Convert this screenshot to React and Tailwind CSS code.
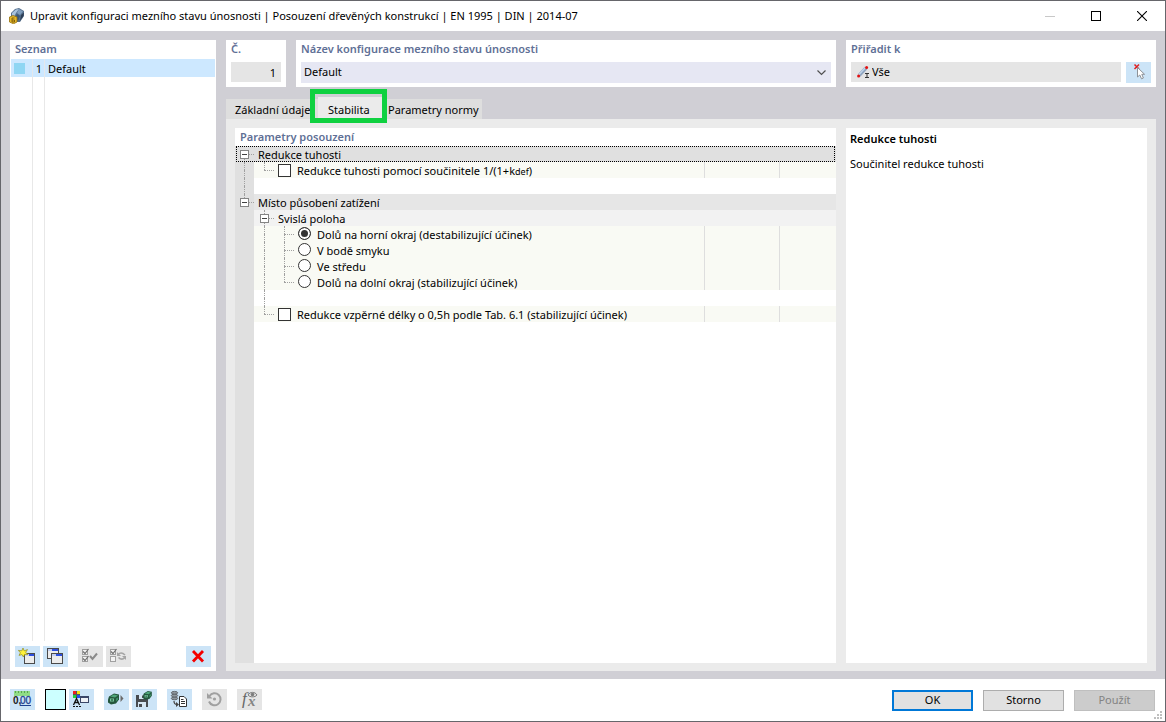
import React, { useState } from 'react';

/* ---------- icons ---------- */

const Icon = ({ children, className = 'h-[21px] w-[25px]', box = '0 0 25 21' }) => (
  <svg viewBox={box} className={className} aria-hidden="true">
    {children}
  </svg>
);

const MiniWindow = ({ x, y, w = 11, h = 10 }) => (
  <g shapeRendering="crispEdges">
    <rect x={x} y={y} width={w + 1} height={h + 1} fill="#4a4a4a" />
    <rect x={x + 1} y={y + 1} width={w - 1} height={h - 1} fill="#ececec" />
    <rect x={x + 1} y={y + 1} width={w - 1} height="2" fill="#2c4fe0" />
    <rect x={x + 1} y={y + 1} width="4" height="2" fill="#c3cff0" />
  </g>
);

const TickBox = ({ y, checked }) => (
  <g fill="none" stroke="#a0a0a0">
    <rect x="4.5" y={y + 0.5} width="5" height="5" fill="#f2f2f2" />
    {checked && <path d={`M5 ${y + 2.5} l2 2 l3.5 -4.5`} stroke="#707070" strokeWidth="1.2" />}
  </g>
);

const Cube = ({ x, y, s = 1 }) => (
  <g transform={`translate(${x} ${y}) scale(${s})`}>
    <path d="M0 6 L1 3 L6 0 L11 1 L11 6 L8 10 L3 11 L0 9 Z" fill="#24573d" />
    <path d="M2 3 L6 1 L10 2 L7 4 Z" fill="#4fa67a" />
    <path d="M2 5 h4 v3 h-4 z" fill="#74c29a" />
    <path d="M3 6 h2 v1 h-2 z" fill="#0e3a23" />
    <path d="M8 5 L10 4 L10 6 L8 8 Z" fill="#3d8f66" />
  </g>
);

const NewIcon = () => (
  <Icon>
    <MiniWindow x={9} y={7} w={10} />
    <path d="M8 2 L9.2 4.8 L12.5 3.6 L10.6 6.4 L13 8.4 L9.6 8.4 L8.4 11 L7 8.6 L4 9.4 L5.4 6.8 L3.4 4.4 L6.8 4.8 Z" fill="#fff23a" stroke="#8f8a20" strokeWidth=".7" />
  </Icon>
);

const CopyIcon = () => (
  <Icon>
    <MiniWindow x={4} y={2} />
    <MiniWindow x={8} y={7} />
  </Icon>
);

const CheckAllIcon = () => (
  <Icon>
    <TickBox y={3} checked />
    <TickBox y={10} checked />
    <path d="M12 10 L14.5 13 L19 7.5" fill="none" stroke="#8a8a8a" strokeWidth="2" />
  </Icon>
);

const InvertIcon = () => (
  <Icon>
    <TickBox y={3} checked />
    <TickBox y={10} />
    <path d="M12 8.5 C14 6.5 16.5 6.5 19 9 M19 11.5 C17 13.5 14.5 13.5 12.5 11.5" fill="none" stroke="#a4a4a4" strokeWidth="1.6" />
    <path d="M11 6 v4 h4 z M20 14 v-4 h-4 z" fill="#a4a4a4" />
  </Icon>
);

const DeleteIcon = () => (
  <Icon>
    <path d="M7 5 L17 15.5 M17 5 L7 15.5" stroke="#f40000" strokeWidth="2.8" fill="none" />
  </Icon>
);

const UnitsIcon = () => (
  <Icon>
    <rect x="4" y="2" width="16" height="5" fill="#90dc86" />
    <path d="M5.5 2v2M8.5 2v2M11.5 2v2M14.5 2v2M17.5 2v2" stroke="#5aa552" />
    <text x="3" y="15" fontSize="10" fontWeight="bold" fontFamily="Liberation Sans Narrow, Liberation Sans, sans-serif" fill="#222">0,</text>
    <text x="10" y="15" fontSize="10" fontFamily="Liberation Sans, sans-serif" fill="#1d3f8f" stroke="#1d3f8f" strokeWidth=".3">00</text>
    <path d="M10 16.5h11" stroke="#1d3f8f" />
  </Icon>
);

const DisplayIcon = () => (
  <Icon>
    <g shapeRendering="crispEdges">
      <path d="M4 2h7v7h-7z" fill="#555" />
      <path d="M4 2h3v3h-3z" fill="#f02020" />
      <path d="M8 2h3v3h-3z" fill="#f0e010" />
      <path d="M4 6h3v3h-3z" fill="#20d040" />
      <path d="M8 6h3v3h-3z" fill="#2050f0" />
      <rect x="11" y="7" width="9" height="7" fill="#3a4668" />
      <rect x="12" y="9" width="7" height="4" fill="#eef1f6" />
    </g>
    <path d="M4.5 16 L7.5 9.5 L10.5 16 M5.5 13.5h4" fill="none" stroke="#111" strokeWidth="1.3" />
    <path d="M4 17.5h8" stroke="#111" strokeDasharray="2 1" />
  </Icon>
);

const ExportIcon = () => (
  <Icon>
    <Cube x={4} y={4.5} />
    <path d="M16.5 6 v7 l3 -3.5 z" fill="#6a6a6a" />
  </Icon>
);

const SaveIcon = () => (
  <Icon>
    <path d="M4 6 h9 l3 3 v9 h-12 z" fill="#474b50" />
    <path d="M7 6 h5 v4 h-5 z M6 13 h8 v5 h-8 z" fill="#d6e6f3" />
    <path d="M10 6.5h1.5v2.5h-1.5z M7 15 h3 v3 h-3z" fill="#474b50" />
    <Cube x={11} y={2} s={0.8} />
  </Icon>
);

const DatabaseIcon = () => (
  <Icon>
    <g fill="#8e979e" stroke="#5a5f64" strokeWidth=".9">
      <ellipse cx="7.5" cy="9.4" rx="3.2" ry="1.4" />
      <ellipse cx="7.5" cy="6.6" rx="3.2" ry="1.4" />
      <ellipse cx="7.5" cy="3.8" rx="3.2" ry="1.4" />
    </g>
    <path d="M7 12 C7 14.5 8 15.5 10 15.5" fill="none" stroke="#444" strokeWidth="1.2" />
    <path d="M9 13 l3 2.5 l-3 2.5 z" fill="#444" />
    <path d="M12.5 7.5 h4.5 l2.5 2.5 v7.5 h-7 z" fill="#fff" stroke="#333" />
    <path d="M14 10.5h2.5M14 12.5h4M14 14.5h4" stroke="#333" />
  </Icon>
);

const ResetIcon = () => (
  <Icon>
    <path d="M7.5 7 A6 6 0 1 1 7 12.5" fill="none" stroke="#a0a0a0" strokeWidth="2" />
    <path d="M5 4 v5.5 h5.5 z" fill="#a0a0a0" />
    <circle cx="12.5" cy="10" r="1.6" fill="#a0a0a0" />
  </Icon>
);

const FormulaIcon = () => (
  <Icon>
    <text x="5" y="15" fontSize="17" fontStyle="italic" fontFamily="Liberation Serif, serif" fill="#666">f</text>
    <text x="11" y="17" fontSize="15" fontStyle="italic" fontWeight="bold" fontFamily="Liberation Serif, serif" fill="#858585">x</text>
    <path d="M11 6 C13 2.5 18 2.5 20 6 C18 8.5 13 8.5 11 6 Z" fill="#e4e4e4" stroke="#7c7c7c" />
    <circle cx="15.5" cy="5.6" r="1.8" fill="#7c7c7c" />
  </Icon>
);

const PickIcon = () => (
  <Icon>
    <path d="M8.5 2.5 L13 7 M13 2.5 L8.5 7" stroke="#e01f1f" strokeWidth="1.5" />
    <path d="M11.5 5.5 V15 L13.8 13 L15.5 16.8 L17.4 16 L15.8 12.3 H18.6 Z" fill="#fff" stroke="#8d9298" />
  </Icon>
);

const MemberIcon = () => (
  <Icon box="0 0 12 12" className="h-3 w-3 shrink-0">
    <path d="M2 9.5 L9 2" stroke="#8fa5c0" strokeWidth="3.4" />
    <path d="M1.5 9 L8.5 1.5" stroke="#c0d4ea" strokeWidth="1.4" />
    <circle cx="1.6" cy="10" r="1.5" fill="#e21010" />
    <circle cx="9.6" cy="1.6" r="1.5" fill="#e21010" />
    <path d="M8 7.5h4M10 7.5v4M8 11.5h4" stroke="#333" />
  </Icon>
);

const AppIcon = () => (
  <Icon box="0 0 16 16" className="h-4 w-4 shrink-0">
    <path d="M2 5 L6 1 L10 0 L15 3 L15 8 L11 14 L8 14 L2 9 Z" fill="#56718f" />
    <path d="M3 5 L7 1.5 L10 1 L7 5 L5 9 L3 8 Z" fill="#a9c3de" />
    <path d="M10 1 L14 3.5 L11 7 L8 5 Z" fill="#7f9dbd" />
    <path d="M8 6 L11 8 L9 13 L6 10 Z" fill="#3d5878" />
    <path d="M12 7 L15 4.5 L14.5 8 L11 13 Z" fill="#2f3f55" />
    <path d="M.5 9 L4 7.5 L8 9 V14 L4.5 15.8 L.5 14 Z" fill="#e6b82a" stroke="#94700c" strokeWidth=".8" />
    <path d="M5.5 10 H3 V14 H5.5 V12 H3" fill="none" stroke="#7a5a05" strokeWidth=".9" />
  </Icon>
);

/* ---------- shared parts ---------- */

const ToolButton = ({ label, disabled, className = '', children }) => (
  <button
    type="button"
    aria-label={label}
    disabled={disabled}
    className={`h-[21px] w-[25px] shrink-0 ${disabled ? 'bg-[#e5e5e5]' : 'bg-[#cce4f7]'} ${className}`}
  >
    {children}
  </button>
);

const heading = 'font-semibold text-[#5f7096]';

/* ---------- tree ---------- */

// The right half of a cell starts at the connector line.
const Cell = ({ kind, gutter, open, onToggle }) => (
  <span className={`relative flex shrink-0 justify-end ${gutter ? 'w-[19px] bg-[#e0e0e0]' : 'w-5'}`}>
    <span className="flex w-[10px] flex-col">
      <span className={`h-2 border-dotted border-[#a0a0a0] ${kind === 'none' || kind === 'first' ? '' : 'border-l'}`} />
      <span
        className={`h-2 border-dotted border-[#a0a0a0] ${kind === 'line' || kind === 'tee' || kind === 'first' || kind === 'middle' ? 'border-l' : ''} ${kind === 'none' || kind === 'line' ? '' : 'border-t'}`}
      />
    </span>
    {onToggle && (
      <button
        type="button"
        aria-label={open ? 'Sbalit' : 'Rozbalit'}
        onClick={onToggle}
        className="absolute right-[5px] top-1 flex size-[9px] items-center justify-center border border-[#848484] bg-white"
      >
        <span className="h-px w-[5px] bg-[#404040]" />
      </button>
    )}
  </span>
);

const Values = () => (
  <>
    <span className="w-[75px] shrink-0 border-l border-[#dedede]" />
    <span className="w-[57px] shrink-0 border-l border-[#dedede]" />
  </>
);

const Leaf = ({ cells, type, name, checked, onChange, children }) => (
  <div className="flex h-4">
    <Cell gutter kind={cells[0]} />
    <div className="flex min-w-0 flex-1 bg-[#f9faf4]">
      {cells.slice(1).map((kind, i) => <Cell key={i} kind={kind} />)}
      <label className="ml-1 flex min-w-0 flex-1 items-start gap-[6px] whitespace-nowrap">
        {type === 'radio' ? (
          <input
            type="radio"
            name={name}
            checked={checked}
            onChange={onChange}
            className="mt-px size-[13px] shrink-0 appearance-none rounded-full border border-[#333] bg-white checked:bg-[#333] checked:shadow-[inset_0_0_0_2px_#fff]"
          />
        ) : (
          <input
            type="checkbox"
            checked={checked}
            onChange={onChange}
            className="mt-[2px] size-[13px] shrink-0 appearance-none border border-[#333] bg-white checked:bg-[#333] checked:shadow-[inset_0_0_0_2px_#fff]"
          />
        )}
        <span>{children}</span>
      </label>
      <Values />
    </div>
  </div>
);

const Spacer = ({ cells }) => (
  <div className="flex h-4">
    <Cell gutter kind={cells[0]} />
    {cells.slice(1).map((kind, i) => <Cell key={i} kind={kind} />)}
  </div>
);

const positions = [
  'Dolů na horní okraj (destabilizující účinek)',
  'V bodě smyku',
  'Ve středu',
  'Dolů na dolní okraj (stabilizující účinek)',
];

const ParameterTree = () => {
  const [open, setOpen] = useState({ stiffness: true, load: true, vertical: true });
  const [position, setPosition] = useState(0);
  const [kdef, setKdef] = useState(false);
  const [length, setLength] = useState(false);
  const toggle = (key) => () => setOpen({ ...open, [key]: !open[key] });

  return (
    <section className="flex min-w-0 flex-1 flex-col bg-white">
      <h2 className={`h-[18px] pl-[5px] leading-[18px] ${heading}`}>Parametry posouzení</h2>
      <div className="leading-[18px]">
        <div className="relative flex h-4 bg-[#e0e0e0]">
          <Cell gutter kind="first" open={open.stiffness} onToggle={toggle('stiffness')} />
          <span className="ml-1">Redukce tuhosti</span>
          <span className="pointer-events-none absolute inset-x-px inset-y-0 border border-dotted border-black" />
        </div>
        {open.stiffness && (
          <>
            <Leaf cells={['line', 'end']} type="checkbox" checked={kdef} onChange={() => setKdef(!kdef)}>
              Redukce tuhosti pomocí součinitele 1/(1+k<span className="text-[9px]">def</span>)
            </Leaf>
            <Spacer cells={['line']} />
          </>
        )}
        <div className="flex h-4 bg-[#e6e6e6]">
          <Cell gutter kind="end" open={open.load} onToggle={toggle('load')} />
          <span className="ml-1">Místo působení zatížení</span>
        </div>
        {open.load && (
          <>
            <div className="flex h-4 bg-[#f2f2f2]">
              <Cell gutter kind="none" />
              <Cell kind="middle" open={open.vertical} onToggle={toggle('vertical')} />
              <span className="ml-1">Svislá poloha</span>
            </div>
            {open.vertical && positions.map((text, i) => (
              <Leaf
                key={text}
                cells={['none', 'line', i === positions.length - 1 ? 'end' : 'tee']}
                type="radio"
                name="position"
                checked={position === i}
                onChange={() => setPosition(i)}
              >
                {text}
              </Leaf>
            ))}
            <Spacer cells={['none', 'line']} />
            <Leaf cells={['none', 'end']} type="checkbox" checked={length} onChange={() => setLength(!length)}>
              Redukce vzpěrné délky o 0,5h podle Tab. 6.1 (stabilizující účinek)
            </Leaf>
          </>
        )}
      </div>
      <div className="w-[19px] flex-1 bg-[#e0e0e0]" />
    </section>
  );
};

/* ---------- window ---------- */

const TitleBar = () => (
  <header className="flex h-[30px] items-center bg-white pl-2">
    <AppIcon />
    <h1 className="ml-[5px] flex-1 whitespace-nowrap">
      Upravit konfiguraci mezního stavu únosnosti | Posouzení dřevěných konstrukcí | EN 1995 | DIN | 2014-07
    </h1>
    <button type="button" disabled aria-label="Minimalizovat" className="flex h-full w-[46px] items-center justify-center">
      <span className="h-px w-[10px] bg-[#c8c8c8]" />
    </button>
    <button type="button" aria-label="Maximalizovat" className="flex h-full w-[46px] items-center justify-center">
      <span className="size-[10px] border border-black" />
    </button>
    <button type="button" aria-label="Zavřít" className="flex h-full w-[46px] items-center justify-center">
      <Icon box="0 0 10 10" className="size-[10px]">
        <path d="M0 0 L10 10 M10 0 L0 10" stroke="#000" strokeWidth="1.1" />
      </Icon>
    </button>
  </header>
);

const ConfigList = () => (
  <aside className="flex w-[206px] shrink-0 flex-col bg-white">
    <h2 className={`h-[19px] pl-[5px] leading-[18px] ${heading}`}>Seznam</h2>
    <div className="mx-px flex h-[18px] bg-[#cde8ff] leading-5">
      <span className="flex w-[21px] items-center pl-[3px]">
        <span className="size-[11px] bg-[#8fd6f3]" />
      </span>
      <span className="w-3 border-l border-[#e4e8ec] pr-[2px] text-right">1</span>
      <span className="flex-1 border-l border-[#e4e8ec] pl-[3px]">Default</span>
    </div>
    <div className="mx-px flex flex-1">
      <span className="w-[21px]" />
      <span className="w-3 border-l border-[#e8e8e8]" />
      <span className="border-l border-[#e8e8e8]" />
    </div>
    <div className="flex px-[5px] pb-1 pt-[5px]">
      <ToolButton label="Nový"><NewIcon /></ToolButton>
      <ToolButton label="Kopírovat" className="ml-[3px]"><CopyIcon /></ToolButton>
      <ToolButton label="Vybrat vše" disabled className="ml-[10px]"><CheckAllIcon /></ToolButton>
      <ToolButton label="Obrátit výběr" disabled className="ml-[3px]"><InvertIcon /></ToolButton>
      <ToolButton label="Smazat" className="ml-auto"><DeleteIcon /></ToolButton>
    </div>
  </aside>
);

const HeaderFields = () => (
  <div className="flex gap-[10px]">
    <div className="w-[60px] bg-white px-[5px] pb-[5px]">
      <label htmlFor="number" className={`block h-[22px] leading-[18px] ${heading}`}>Č.</label>
      <input id="number" readOnly value="1" className="block h-5 w-full bg-[#e5e5e5] px-[5px] text-right" />
    </div>
    <div className="min-w-0 flex-1 bg-white px-[5px] pb-1">
      <label htmlFor="name" className={`block h-[22px] leading-[18px] ${heading}`}>
        Název konfigurace mezního stavu únosnosti
      </label>
      <div className="relative">
        <select id="name" className="block h-[21px] w-full appearance-none bg-[#e6e7f3] px-[3px]">
          <option>Default</option>
        </select>
        <Icon box="0 0 9 6" className="pointer-events-none absolute right-[5px] top-2 h-[6px] w-[9px]">
          <path d="M.5 .5 L4.5 4.5 L8.5 .5" fill="none" stroke="#505050" strokeWidth="1.2" />
        </Icon>
      </div>
    </div>
    <div className="w-[310px] bg-white px-[5px] pb-1">
      <label htmlFor="assign" className={`block h-[22px] leading-[18px] ${heading}`}>Přiřadit k</label>
      <div className="flex gap-[5px]">
        <div className="flex h-5 flex-1 items-center bg-[#e5e5e5] pl-[6px]">
          <MemberIcon />
          <input id="assign" readOnly value="Vše" className="ml-[3px] min-w-0 flex-1 bg-transparent" />
        </div>
        <ToolButton label="Vybrat v modelu"><PickIcon /></ToolButton>
      </div>
    </div>
  </div>
);

const Tabs = () => (
  <div role="tablist" className="flex h-5 leading-[22px]">
    <button type="button" role="tab" className="w-[92px] whitespace-nowrap bg-[#dedede] pl-[9px] text-left">Základní údaje</button>
    <button type="button" role="tab" aria-selected="true" className="relative -mt-[2px] h-[22px] w-[66px] bg-[#ebebeb] pl-[10px] pt-[2px] text-left">
      Stabilita
      <span className="pointer-events-none absolute -left-2 -right-[3px] -top-2 h-[34px] border-[5px] border-[#0fd140]" />
    </button>
    <button type="button" role="tab" className="w-[98px] whitespace-nowrap bg-[#dedede] pl-1 text-left">Parametry normy</button>
  </div>
);

const Footer = () => (
  <footer className="flex h-[42px] items-start bg-white pl-[9px] pr-[10px] pt-[10px]">
    <ToolButton label="Jednotky"><UnitsIcon /></ToolButton>
    <button type="button" aria-label="Barva" className="ml-[10px] size-[21px] border border-black bg-[#ccffff]" />
    <ToolButton label="Zobrazení" className="ml-[3px]"><DisplayIcon /></ToolButton>
    <ToolButton label="Načíst" className="ml-[10px]"><ExportIcon /></ToolButton>
    <ToolButton label="Uložit" className="ml-[3px]"><SaveIcon /></ToolButton>
    <ToolButton label="Převzít z databáze" className="ml-[10px]"><DatabaseIcon /></ToolButton>
    <ToolButton label="Obnovit" disabled className="ml-[10px]"><ResetIcon /></ToolButton>
    <ToolButton label="Vzorce" disabled className="ml-[10px]"><FormulaIcon /></ToolButton>
    <div className="ml-auto flex gap-[10px] pt-px">
      <button type="button" className="h-[21px] w-[81px] border-2 border-[#0078d7] bg-[#e1e1e1]">OK</button>
      <button type="button" className="h-[21px] w-[81px] border border-[#adadad] bg-[#e1e1e1]">Storno</button>
      <button type="button" disabled className="h-[21px] w-[81px] border border-[#bfbfbf] bg-[#cccccc] text-[#838383]">Použít</button>
    </div>
  </footer>
);

const App = () => (
  <div className="relative flex min-h-screen flex-col border border-[#66666b] bg-[#d0cfd5] font-['Noto_Sans',sans-serif] text-[11px] text-black">
    <TitleBar />
    <main className="flex flex-1 gap-[10px] px-[9px] pb-2 pt-[9px]">
      <ConfigList />
      <div className="flex min-w-0 flex-1 flex-col">
        <HeaderFields />
        <div className="mt-3 flex flex-1 flex-col">
          <Tabs />
          <div className="flex flex-1 gap-[10px] bg-[#ebebeb] px-[9px] pb-2 pt-[9px]">
            <ParameterTree />
            <section className="w-[301px] bg-white px-1 pt-[3px]">
              <h2 className="font-semibold leading-4">Redukce tuhosti</h2>
              <p className="mt-[9px] leading-4">Součinitel redukce tuhosti</p>
            </section>
          </div>
        </div>
      </div>
    </main>
    <Footer />
    <Icon box="0 0 8 8" className="pointer-events-none absolute bottom-[2px] right-[3px] size-2">
      <path d="M6 0h2v2h-2z M3 3h2v2h-2z M6 3h2v2h-2z M0 6h2v2h-2z M3 6h2v2h-2z M6 6h2v2h-2z" fill="#bfbfbf" />
    </Icon>
  </div>
);

export default App;
